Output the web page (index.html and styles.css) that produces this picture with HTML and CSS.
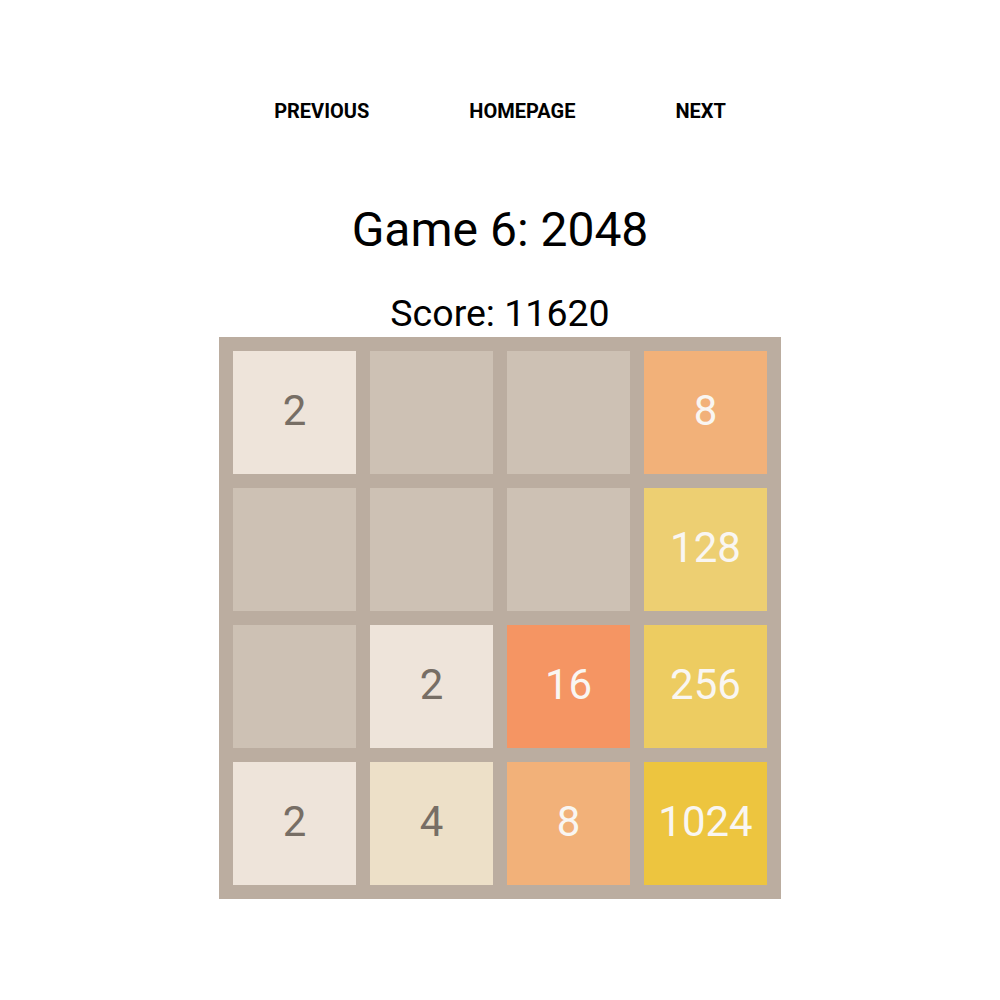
FILE: index.html
```html
<!DOCTYPE html>
<html>
<head>
<meta charset="utf-8">
<link rel="stylesheet" href="styles.css">
</head>
<body>
<nav class="nav">
  <a class="nav-link" href="#">Previous</a>
  <a class="nav-link" href="#">Homepage</a>
  <a class="nav-link" href="#">Next</a>
</nav>
<main class="game">
  <h1 class="title">Game 6: 2048</h1>
  <div class="score">Score: 11620</div>
  <div class="board">
    <div class="tile t2">2</div>
    <div class="tile"></div>
    <div class="tile"></div>
    <div class="tile t8">8</div>
    <div class="tile"></div>
    <div class="tile"></div>
    <div class="tile"></div>
    <div class="tile t128">128</div>
    <div class="tile"></div>
    <div class="tile t2">2</div>
    <div class="tile t16">16</div>
    <div class="tile t256">256</div>
    <div class="tile t2">2</div>
    <div class="tile t4">4</div>
    <div class="tile t8">8</div>
    <div class="tile t1024">1024</div>
  </div>
</main>
</body>
</html>
```
FILE: styles.css
```css
html, body {
  margin: 0;
  padding: 0;
  background: #fff;
  font-family: Roboto, "Liberation Sans", sans-serif;
  color: #000;
}
.nav {
  display: flex;
  justify-content: center;
  gap: 100px;
  padding-top: 99px;
  height: 24px;
}
.nav-link {
  font-size: 20px;
  font-weight: 700;
  text-transform: uppercase;
  color: #000;
  text-decoration: none;
  line-height: 24px;
}
.game {
  display: flex;
  flex-direction: column;
  align-items: center;
}
.title {
  margin: 79px 0 0;
  font-size: 48px;
  font-weight: 400;
  line-height: 56px;
}
.score {
  margin-top: 34px;
  font-size: 37.5px;
  line-height: 42px;
}
.board {
  margin-top: 3px;
  background: #bbada0;
  padding: 14px;
  display: grid;
  grid-template-columns: repeat(4, 123px);
  grid-auto-rows: 123px;
  gap: 14px;
}
.tile {
  background: #cdc1b4;
  display: flex;
  align-items: center;
  justify-content: center;
  font-size: 42px;
  line-height: 1;
  padding-bottom: 3px;
  box-sizing: border-box;
  color: #776e65;
}
.t2 { background: #eee4da; }
.t4 { background: #ede0c8; }
.t8 { background: #f2b179; color: #f9f6f2; }
.t16 { background: #f59563; color: #f9f6f2; }
.t128 { background: #edcf72; color: #f9f6f2; }
.t256 { background: #edcc61; color: #f9f6f2; }
.t1024 { background: #edc53f; color: #f9f6f2; }
```
